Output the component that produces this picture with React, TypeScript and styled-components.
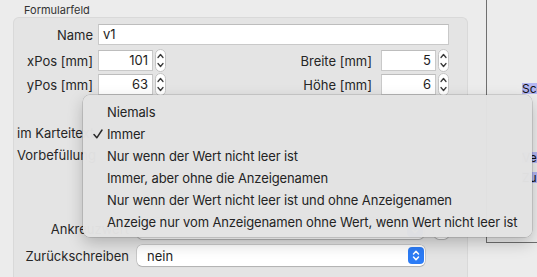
import React from "react";
import styled, { createGlobalStyle } from "styled-components";

const Global = createGlobalStyle`
  html, body { margin: 0; padding: 0; background: #ececec; }
  body { font-family: Inter, "Liberation Sans", sans-serif; -webkit-font-smoothing: antialiased; }
  * { box-sizing: border-box; }
`;

const Screen = styled.div`
  position: relative;
  width: 537px;
  height: 277px;
  overflow: hidden;
  display: flex;
  align-items: flex-start;
  background: #ececec;
  color: #262626;
  font-size: 13px;
`;

const LeftPane = styled.div`
  width: 486px;
  height: 277px;
  display: flex;
  flex-direction: column;
`;

const Title = styled.div`
  padding: 3px 0 0 24px;
  height: 17px;
  line-height: 14px;
  font-size: 11px;
  color: #333;
`;

const GroupBox = styled.div`
  margin-left: 13px;
  width: 455px;
  flex: 1;
  border: 1px solid #d9d9d9;
  border-bottom: none;
  border-radius: 6px 6px 0 0;
  background: #e4e4e4;
  padding: 6px 18px 0 0;
  display: flex;
  flex-direction: column;
`;

const Row = styled.div<{ $h: number; $mt?: number }>`
  display: flex;
  align-items: center;
  height: ${(p) => p.$h}px;
  margin-top: ${(p) => p.$mt ?? 0}px;
  flex-shrink: 0;
`;

const Label = styled.span<{ $w: number; $gap?: number }>`
  width: ${(p) => p.$w}px;
  margin-right: ${(p) => p.$gap ?? 5}px;
  text-align: right;
  white-space: nowrap;
  flex-shrink: 0;
  overflow: visible;
`;

const LeftLabel = styled.span`
  padding-left: 3px;
  white-space: nowrap;
`;

const TextField = styled.div<{ $w?: number; $align?: string }>`
  width: ${(p) => (p.$w ? `${p.$w}px` : "auto")};
  flex: ${(p) => (p.$w ? "0 0 auto" : "1")};
  height: 21px;
  background: #fff;
  border: 1px solid #c9c9c9;
  border-top-color: #bdbdbd;
  padding: 0 4px;
  line-height: 19px;
  text-align: ${(p) => p.$align ?? "left"};
  color: #1e1e1e;
`;

const Pair = styled.div`
  display: flex;
  align-items: center;
`;

const Spacer = styled.div`
  flex: 1;
`;

const StepperBox = styled.span`
  display: inline-flex;
  margin-left: 2px;
  width: 11px;
  height: 23px;
`;

const SelectBox = styled.div<{ $w: number }>`
  width: ${(p) => p.$w}px;
  height: 21px;
  background: #fff;
  border-radius: 5px;
  box-shadow: 0 0 0 0.5px rgba(0, 0, 0, 0.22), 0 1px 1px rgba(0, 0, 0, 0.12);
  display: flex;
  align-items: center;
  justify-content: space-between;
  padding: 0 1px 0 10px;
  color: #1e1e1e;
`;

const BlueButton = styled.span`
  width: 16px;
  height: 17px;
  border-radius: 4px;
  background: #2c7cf6;
  display: inline-flex;
  align-items: center;
  justify-content: center;
`;

const RoundButton = styled.span`
  margin-left: 10px;
  width: 15px;
  height: 21px;
  border-radius: 5px;
  background: #fff;
  box-shadow: 0 0 0 0.5px rgba(0, 0, 0, 0.22), 0 1px 1px rgba(0, 0, 0, 0.12);
`;

const RightPane = styled.div`
  flex: 1;
  height: 243px;
  border-left: 1px solid #6f6f6f;
  border-bottom: 1px solid #6f6f6f;
  padding: 83px 0 0 35px;
  display: flex;
  flex-direction: column;
  font-size: 12px;
  overflow: hidden;
`;

const Sel = styled.span<{ $mt?: number }>`
  display: block;
  margin-top: ${(p) => p.$mt ?? 0}px;
  height: 11px;
  line-height: 11px;
  white-space: nowrap;
  background: #b3b6f1;
  color: #111;
`;

const Menu = styled.div`
  position: absolute;
  left: 83px;
  top: 95px;
  width: 449px;
  height: 142px;
  border-radius: 7px;
  background: rgba(226, 226, 226, 0.98);
  box-shadow: 0 0 0 0.5px rgba(0, 0, 0, 0.22), 0 6px 16px rgba(0, 0, 0, 0.22);
  padding: 6px 0 4px;
  display: flex;
  flex-direction: column;
`;

const MenuItem = styled.div`
  height: 22px;
  display: flex;
  align-items: center;
  color: #232323;
  white-space: nowrap;
  letter-spacing: -0.12px;
`;

const CheckCol = styled.span`
  width: 24px;
  padding-left: 10px;
  display: inline-flex;
  align-items: center;
`;

const Stepper = () => (
  <StepperBox>
    <svg width="11" height="23" viewBox="0 0 11 23">
      <rect x="0.5" y="0.5" width="10" height="22" rx="5" fill="#fff" stroke="#c4c4c4" />
      <path d="M3 8.5 L5.5 5.5 L8 8.5" fill="none" stroke="#3a3a3a" strokeWidth="1.3" strokeLinecap="round" strokeLinejoin="round" />
      <path d="M3 14.5 L5.5 17.5 L8 14.5" fill="none" stroke="#3a3a3a" strokeWidth="1.3" strokeLinecap="round" strokeLinejoin="round" />
    </svg>
  </StepperBox>
);

const UpDown = () => (
  <svg width="10" height="13" viewBox="0 0 10 13">
    <path d="M2.5 5 L5 2.2 L7.5 5" fill="none" stroke="#fff" strokeWidth="1.5" strokeLinecap="round" strokeLinejoin="round" />
    <path d="M2.5 8 L5 10.8 L7.5 8" fill="none" stroke="#fff" strokeWidth="1.5" strokeLinecap="round" strokeLinejoin="round" />
  </svg>
);

const Check = () => (
  <svg width="10" height="10" viewBox="0 0 10 10">
    <path d="M1 5.5 L3.8 8.8 L9 1" fill="none" stroke="#2a2a2a" strokeWidth="1.5" strokeLinecap="round" strokeLinejoin="round" />
  </svg>
);

const options = [
  "Niemals",
  "Immer",
  "Nur wenn der Wert nicht leer ist",
  "Immer, aber ohne die Anzeigenamen",
  "Nur wenn der Wert nicht leer ist und ohne Anzeigenamen",
  "Anzeige nur vom Anzeigenamen ohne Wert, wenn Wert nicht leer ist",
];

export default function App() {
  return (
    <Screen>
      <Global />
      <LeftPane>
        <Title>Formularfeld</Title>
        <GroupBox>
          <Row $h={21}>
            <Label $w={79}>Name</Label>
            <TextField>v1</TextField>
          </Row>
          <Row $h={23} $mt={4}>
            <Label $w={79}>xPos [mm]</Label>
            <Pair>
              <TextField $w={55} $align="right">101</TextField>
              <Stepper />
            </Pair>
            <Spacer />
            <Label $w={120} $gap={9}>Breite [mm]</Label>
            <Pair>
              <TextField $w={55} $align="right">5</TextField>
              <Stepper />
            </Pair>
          </Row>
          <Row $h={23} $mt={1}>
            <Label $w={79}>yPos [mm]</Label>
            <Pair>
              <TextField $w={55} $align="right">63</TextField>
              <Stepper />
            </Pair>
            <Spacer />
            <Label $w={120} $gap={9}>Höhe [mm]</Label>
            <Pair>
              <TextField $w={55} $align="right">6</TextField>
              <Stepper />
            </Pair>
          </Row>
          <Row $h={22} $mt={26}>
            <LeftLabel>im Karteitext</LeftLabel>
          </Row>
          <Row $h={22}>
            <LeftLabel>Vorbefüllung</LeftLabel>
          </Row>
          <Row $h={21} $mt={52}>
            <Label $w={115} $gap={8}>Ankreuzwert</Label>
            <SelectBox $w={288}>
              <span />
              <BlueButton><UpDown /></BlueButton>
            </SelectBox>
            <RoundButton />
          </Row>
          <Row $h={21} $mt={6}>
            <Label $w={115} $gap={8}>Zurückschreiben</Label>
            <SelectBox $w={288}>
              <span>nein</span>
              <BlueButton><UpDown /></BlueButton>
            </SelectBox>
          </Row>
        </GroupBox>
      </LeftPane>
      <RightPane>
        <Sel>Score</Sel>
        <Sel $mt={58}>Verb</Sel>
        <Sel $mt={9}>Zu</Sel>
      </RightPane>
      <Menu>
        {options.map((o, i) => (
          <MenuItem key={o}>
            <CheckCol>{i === 1 ? <Check /> : null}</CheckCol>
            {o}
          </MenuItem>
        ))}
      </Menu>
    </Screen>
  );
}
